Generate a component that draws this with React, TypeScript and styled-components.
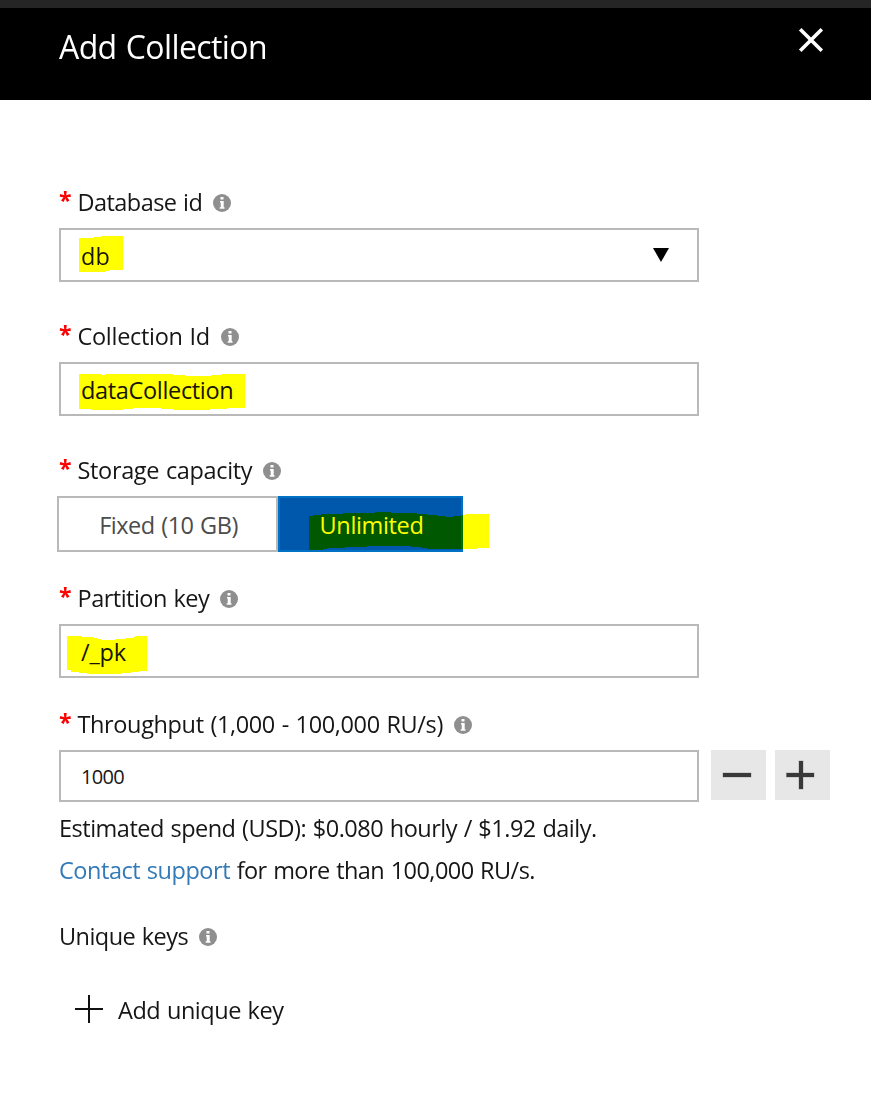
import React from "react";
import styled, { createGlobalStyle } from "styled-components";

const GlobalStyle = createGlobalStyle`
  * { box-sizing: border-box; }
  body {
    margin: 0;
    background: #fff;
    color: #161616;
    font-family: "Open Sans", "Noto Sans", sans-serif;
    font-size: 23.5px;
    line-height: 32px;
    word-spacing: 1px;
  }
`;

const Panel = styled.main`
  position: relative;
  min-height: 1093px;
  background: #fff;
`;

const Header = styled.header`
  display: flex;
  justify-content: space-between;
  align-items: flex-start;
  height: 100px;
  padding: 17px 47px 0 59px;
  border-top: 8px solid #252525;
  background: #000;
  color: #fff;
`;

const Title = styled.h1`
  margin: 0;
  font-size: 32px;
  font-weight: 400;
  line-height: 44px;
  letter-spacing: -0.6px;
  word-spacing: 1.5px;
`;

const CloseButton = styled.button`
  display: flex;
  margin: 2px 0 0;
  padding: 0;
  border: 0;
  background: none;
`;

const Form = styled.form`
  display: flex;
  flex-direction: column;
  padding: 86px 41px 0 59px;
`;

const Field = styled.div<{ $after: number }>`
  display: flex;
  flex-direction: column;
  gap: 10px;
  margin-bottom: ${(p) => p.$after}px;
`;

const LabelRow = styled.label`
  display: flex;
  align-items: flex-start;
  height: 32px;
`;

const Required = styled.span`
  width: 18.5px;
  color: #f00;
  font-size: 23px;
  font-weight: 700;
  line-height: 28px;
`;

const Spaced = styled.span<{ $spacing: number; $gap?: number }>`
  margin-right: ${(p) => p.$gap ?? 0}px;
  letter-spacing: ${(p) => p.$spacing}px;
  white-space: nowrap;
`;

const InfoSvg = styled.svg`
  flex: none;
  margin-top: 8px;
`;

const Box = styled.div<{ $height?: number; $drop?: number; $small?: boolean }>`
  position: relative;
  display: flex;
  align-items: center;
  justify-content: space-between;
  width: 640px;
  height: ${(p) => p.$height ?? 54}px;
  padding: ${(p) => p.$drop ?? 0}px 28px 0 20px;
  border: 2px solid #b9b9b9;
  background: #fff;
  font-size: ${(p) => (p.$small ? "20px" : "inherit")};
`;

const Caret = styled.svg`
  margin-top: -3px;
`;

const Marker = styled.svg<{ $x: number; $y: number }>`
  position: absolute;
  left: ${(p) => p.$x}px;
  top: ${(p) => p.$y}px;
  fill: #ff0;
  mix-blend-mode: multiply;
  pointer-events: none;
`;

const Toggle = styled.div`
  position: relative;
  display: flex;
  width: 406px;
  height: 56px;
  margin-left: -2px;
`;

const Option = styled.div<{ $width: number; $active?: boolean }>`
  display: flex;
  align-items: center;
  justify-content: center;
  width: ${(p) => p.$width}px;
  padding: 2px 0 0 2px;
  border: 2px solid ${(p) => (p.$active ? "#0072c6" : "#b9b9b9")};
  background: ${(p) => (p.$active ? "#0058ad" : "#fff")};
  color: ${(p) => (p.$active ? "#fff" : "#4c4c4c")};
`;

const ThroughputRow = styled.div`
  display: flex;
  align-items: flex-start;
`;

const StepButton = styled.button<{ $left: number }>`
  display: flex;
  width: 55px;
  height: 50px;
  margin: 0 0 0 ${(p) => p.$left}px;
  padding: 0;
  border: 0;
  background: #e7e7e7;
`;

const Note = styled.p`
  height: 32px;
  margin: 0 0 10px;
  white-space: nowrap;
`;

const Link = styled.a`
  color: #337ab7;
  letter-spacing: -0.46px;
`;

const UniqueKeys = styled.div`
  display: flex;
  margin-top: 24px;
`;

const AddRow = styled.div`
  display: flex;
  align-items: flex-start;
  gap: 15px;
  margin: 42px 0 0 16px;
`;

const PlusIcon = styled.svg`
  margin-top: 1px;
`;

function Info() {
  return (
    <InfoSvg width="18" height="18" viewBox="0 0 18 18">
      <circle cx="9" cy="9" r="9" fill="#8f8f8f" />
      <path d="M7.5 3h3v2.6h-3zM7 7.1h3.7v6.2h.8v1.4h-4.8v-1.4h1V8.5H7z" fill="#fff" />
    </InfoSvg>
  );
}

function Label({ text, spacing, gap }: { text: string; spacing: number; gap: number }) {
  return (
    <LabelRow>
      <Required>*</Required>
      <Spaced $spacing={spacing} $gap={gap}>{text}</Spaced>
      <Info />
    </LabelRow>
  );
}

export default function App() {
  return (
    <Panel>
      <GlobalStyle />
      <Header>
        <Title>Add Collection</Title>
        <CloseButton type="button" aria-label="Close">
          <svg width="26" height="26" viewBox="0 0 26 26">
            <path d="M2.2 2.2L23.8 23.8M23.8 2.2L2.2 23.8" stroke="#fff" strokeWidth="3.6" />
          </svg>
        </CloseButton>
      </Header>
      <Form>
        <Field $after={38}>
          <Label text="Database id" spacing={-0.55} gap={11} />
          <Box $drop={2}>
            <Spaced $spacing={0}>db</Spaced>
            <Caret width="17" height="14" viewBox="0 0 17 14">
              <path d="M1 0H17L9 14z" fill="#000" />
            </Caret>
            <Marker $x={18} $y={6} width="44" height="36" viewBox="0 0 44 36">
              <path d="M0 2H15V1H22V0H44V34H30V35H27V36H0z" />
            </Marker>
          </Box>
        </Field>
        <Field $after={38}>
          <Label text="Collection Id" spacing={-0.29} gap={11} />
          <Box $drop={2}>
            <Spaced $spacing={-0.33}>dataCollection</Spaced>
            <Marker $x={18} $y={10} width="166" height="36" viewBox="0 0 166 36">
              <path d="M0 0H22V1H26V0H94V1H106V2H132V1H142V0H166V34H148V35H131V36H94V35H82V34H54V35H44V36H12V35H0z" />
            </Marker>
          </Box>
        </Field>
        <Field $after={30}>
          <Label text="Storage capacity" spacing={-0.34} gap={11} />
          <Toggle>
            <Option $width={221}>
              <Spaced $spacing={-0.5}>Fixed (10 GB)</Spaced>
            </Option>
            <Option $width={185} $active>
              <Spaced $spacing={-0.35}>Unlimited</Spaced>
            </Option>
            <Marker $x={252} $y={16} width="180" height="38" viewBox="0 0 180 38">
              <path d="M0 4H4V3H12V2H34V1H66V0H82V1H108V2H118V3H128V4H136V5H144V4H152V3H156V2H180V36H168V37H118V36H112V35H102V34H88V34H58V35H36V36H18V37H14V38H0z" />
            </Marker>
          </Toggle>
        </Field>
        <Field $after={30}>
          <Label text="Partition key" spacing={-0.51} gap={11} />
          <Box $drop={2}>
            <Spaced $spacing={-0.2}>/_pk</Spaced>
            <Marker $x={6} $y={10} width="80" height="38" viewBox="0 0 80 38">
              <path d="M0 0H14V1H26V2H31V3H34V4H48V3H58V2H66V1H68V0H80V35H72V36H64V37H54V38H20V37H12V36H4V34H0z" />
            </Marker>
          </Box>
        </Field>
        <Field $after={10}>
          <Label text="Throughput (1,000 - 100,000 RU/s)" spacing={-0.37} gap={10.7} />
          <ThroughputRow>
            <Box $height={52} $drop={1} $small>
              <Spaced $spacing={-0.7}>1000</Spaced>
            </Box>
            <StepButton $left={12} type="button" aria-label="Decrease">
              <svg width="55" height="50" viewBox="0 0 55 50">
                <path d="M11.5 22.5h29v5h-29z" fill="#b5b5b5" />
                <path d="M12 23h28v4H12z" fill="#393939" />
              </svg>
            </StepButton>
            <StepButton $left={9} type="button" aria-label="Increase">
              <svg width="55" height="50" viewBox="0 0 55 50">
                <path d="M11 22.5h12.5v-12h5v12h11v5h-11v12h-5v-12H11z" fill="#b5b5b5" />
                <path d="M11.5 23H24V11h4v12h11v4H28v12h-4V27H11.5z" fill="#393939" />
              </svg>
            </StepButton>
          </ThroughputRow>
        </Field>
        <Note>
          <Spaced $spacing={-0.5}>Estimated spend (USD): $0.080 hourly / $1.92 daily.</Spaced>
        </Note>
        <Note>
          <Link>Contact support</Link>
          <Spaced $spacing={-0.56}> for more than 100,000 RU/s.</Spaced>
        </Note>
        <UniqueKeys>
          <Spaced $spacing={-0.55} $gap={11}>Unique keys</Spaced>
          <Info />
        </UniqueKeys>
        <AddRow>
          <PlusIcon width="28" height="28" viewBox="0 0 28 28">
            <path d="M0 14h28M14 0v28" stroke="#111" strokeWidth="2" />
          </PlusIcon>
          <Spaced $spacing={-0.45}>Add unique key</Spaced>
        </AddRow>
      </Form>
    </Panel>
  );
}
